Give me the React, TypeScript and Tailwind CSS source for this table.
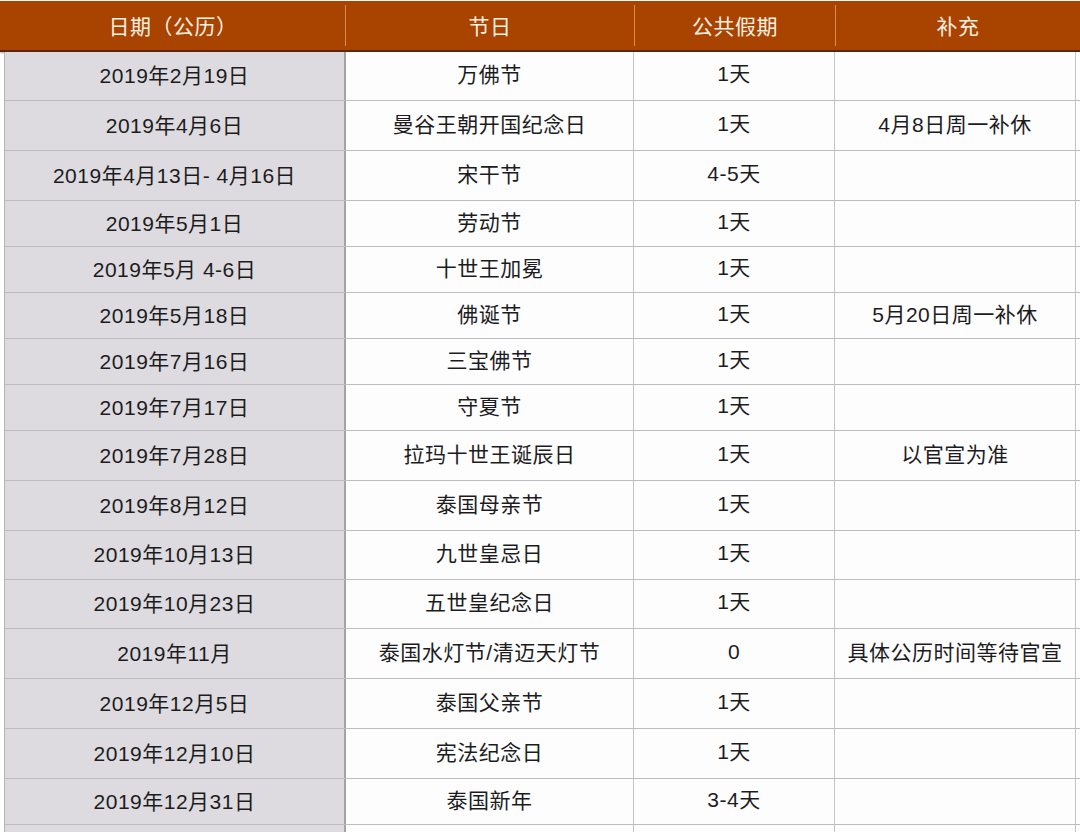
import React from 'react';

// 2019 泰国公共假期
const rows = [
  { date: "2019年2月19日", name: "万佛节", days: "1天", note: "", h: "h-[49px]" },
  { date: "2019年4月6日", name: "曼谷王朝开国纪念日", days: "1天", note: "4月8日周一补休", h: "h-[50px]" },
  { date: "2019年4月13日- 4月16日", name: "宋干节", days: "4-5天", note: "", h: "h-[50px]" },
  { date: "2019年5月1日", name: "劳动节", days: "1天", note: "", h: "h-[46px]" },
  { date: "2019年5月 4-6日", name: "十世王加冕", days: "1天", note: "", h: "h-[46px]" },
  { date: "2019年5月18日", name: "佛诞节", days: "1天", note: "5月20日周一补休", h: "h-[46px]" },
  { date: "2019年7月16日", name: "三宝佛节", days: "1天", note: "", h: "h-[46px]" },
  { date: "2019年7月17日", name: "守夏节", days: "1天", note: "", h: "h-[46px]" },
  { date: "2019年7月28日", name: "拉玛十世王诞辰日", days: "1天", note: "以官宣为准", h: "h-[50px]" },
  { date: "2019年8月12日", name: "泰国母亲节", days: "1天", note: "", h: "h-[50px]" },
  { date: "2019年10月13日", name: "九世皇忌日", days: "1天", note: "", h: "h-[49px]" },
  { date: "2019年10月23日", name: "五世皇纪念日", days: "1天", note: "", h: "h-[49px]" },
  { date: "2019年11月", name: "泰国水灯节/清迈天灯节", days: "0", note: "具体公历时间等待官宣", h: "h-[50px]" },
  { date: "2019年12月5日", name: "泰国父亲节", days: "1天", note: "", h: "h-[50px]" },
  { date: "2019年12月10日", name: "宪法纪念日", days: "1天", note: "", h: "h-[50px]" },
  { date: "2019年12月31日", name: "泰国新年", days: "3-4天", note: "", h: "h-[46px]" },
];

const font = { fontFamily: '"Liberation Sans", "Noto Sans CJK SC", sans-serif' };

function Row({ row }: { row: typeof rows[number] }) {
  return (
    <div className={`flex ${row.h} border-b border-[#bdbcc0]`}>
      <div className="flex w-[341px] shrink-0 items-center justify-center border-r-2 border-[#a3a2a6] bg-[#dddbdf]">
        {row.date}
      </div>
      <div className="flex w-[288px] shrink-0 items-center justify-center border-r border-[#c4c3c6] pb-[2px]">
        {row.name}
      </div>
      <div className="flex w-[201px] shrink-0 items-center justify-center border-r border-[#c4c3c6] pb-[4px]">
        {row.days}
      </div>
      <div className="flex w-[241px] shrink-0 items-center justify-center border-r border-[#c4c3c6] pb-[2px]">
        {row.note}
      </div>
    </div>
  );
}

export default function App() {
  return (
    <div
      className="h-[832px] w-[1080px] overflow-hidden bg-white pt-[1px] text-[21px] tracking-[0.5px] text-[#1c1c1e]"
      style={font}
    >
      <div className="flex h-[51px] border-b-2 border-[#5e2606] bg-[#a94300] pl-[1px] text-[#fbf0e2] shadow-[0_1px_2px_rgba(0,0,0,0.35)]">
        <div className="flex w-[344px] shrink-0 items-center justify-center pt-[2px]">日期（公历）</div>
        <div className="my-[4px] w-px bg-[#d98a55]" />
        <div className="flex w-[288px] shrink-0 items-center justify-center pt-[2px]">节日</div>
        <div className="my-[4px] w-px bg-[#d98a55]" />
        <div className="flex w-[200px] shrink-0 items-center justify-center pt-[2px]">公共假期</div>
        <div className="my-[4px] w-px bg-[#d98a55]" />
        <div className="flex flex-1 items-center justify-center pt-[2px]">补充</div>
      </div>
      <div className="ml-[4px] border-l border-[#b5b4b8] bg-[#fdfdfe]">
        {rows.map((row) => (
          <Row key={row.date} row={row} />
        ))}
        <div className="flex h-[20px]">
          <div className="w-[341px] border-r-2 border-[#a3a2a6] bg-[#dddbdf]" />
          <div className="w-[288px] border-r border-[#c4c3c6]" />
          <div className="w-[201px] border-r border-[#c4c3c6]" />
          <div className="w-[241px] border-r border-[#c4c3c6]" />
        </div>
      </div>
    </div>
  );
}
